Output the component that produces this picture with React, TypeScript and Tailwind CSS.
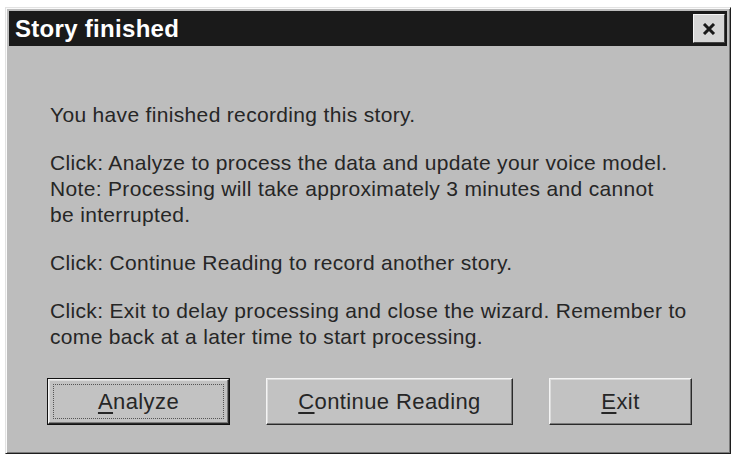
import React from 'react';

const font = { fontFamily: '"Liberation Sans", Arial, sans-serif' };

const CloseIcon: React.FC = () => (
    <svg width="14" height="12" viewBox="0 0 14 12">
        <path d="M2 1 L12 11 M12 1 L2 11" stroke="#1a1a1a" strokeWidth="3" />
    </svg>
);

const Button: React.FC<{ width: string; accel: string; rest: string; isDefault?: boolean }> = ({ width, accel, rest, isDefault }) => (
    <div className={`${width} h-[47px] ${isDefault ? 'border border-[#111]' : ''}`}>
        <div className="h-full w-full bg-[#c2c2c2] border border-t-[#f4f4f4] border-l-[#f4f4f4] border-r-[#2a2a2a] border-b-[#2a2a2a] shadow-[inset_-1px_-1px_0_#7c7c7c,inset_1px_1px_0_#dcdcdc] flex items-center justify-center p-[4px]">
            <div className={`h-full w-full flex items-center justify-center ${isDefault ? 'border border-dotted border-[#555]' : ''}`}>
                <span className="text-[22px] tracking-[0.4px] text-[#262626] leading-none">
                    <span className="underline underline-offset-[3px]">{accel}</span>{rest}
                </span>
            </div>
        </div>
    </div>
);

const App: React.FC = () => {
    return (
        <div className="w-[734px] h-[459px] bg-white pt-[7px] pl-[5px]" style={font}>
            <div className="w-[726px] h-[447px] bg-[#bdbdbd] border border-t-[#e2e2e2] border-l-[#e2e2e2] border-r-[#1e1e1e] border-b-[#1e1e1e] shadow-[inset_1px_1px_0_#fafafa,inset_-1px_-1px_0_#7a7a7a] p-[3px] flex flex-col">
                <div className="h-[35px] bg-[#1a1a1a] flex items-center justify-between pl-[6px] pr-[2px]">
                    <span className="text-white font-bold text-[24px] leading-none tracking-[0.3px]">Story finished</span>
                    <div className="w-[32px] h-[29px] bg-[#d6d6d6] border border-t-[#f5f5f5] border-l-[#f5f5f5] border-r-[#444] border-b-[#444] flex items-center justify-center">
                        <CloseIcon />
                    </div>
                </div>

                <div className="flex-1 pl-[41px] pt-[56px] text-[21px] tracking-[0.33px] leading-[26px] text-[#262626] flex flex-col">
                    <p>You have finished recording this story.</p>
                    <p className="mt-[22px]">
                        Click: Analyze to process the data and update your voice model.<br />
                        Note: Processing will take approximately 3 minutes and cannot<br />
                        be interrupted.
                    </p>
                    <p className="mt-[22px]">Click: Continue Reading to record another story.</p>
                    <p className="mt-[22px]">
                        Click: Exit to delay processing and close the wizard. Remember to<br />
                        come back at a later time to start processing.
                    </p>

                    <div className="mt-[28px] -ml-[3px] flex gap-[36px]">
                        <Button width="w-[183px]" accel="A" rest="nalyze" isDefault />
                        <Button width="w-[247px]" accel="C" rest="ontinue Reading" />
                        <Button width="w-[143px]" accel="E" rest="xit" />
                    </div>
                </div>
            </div>
        </div>
    );
};

export default App;
